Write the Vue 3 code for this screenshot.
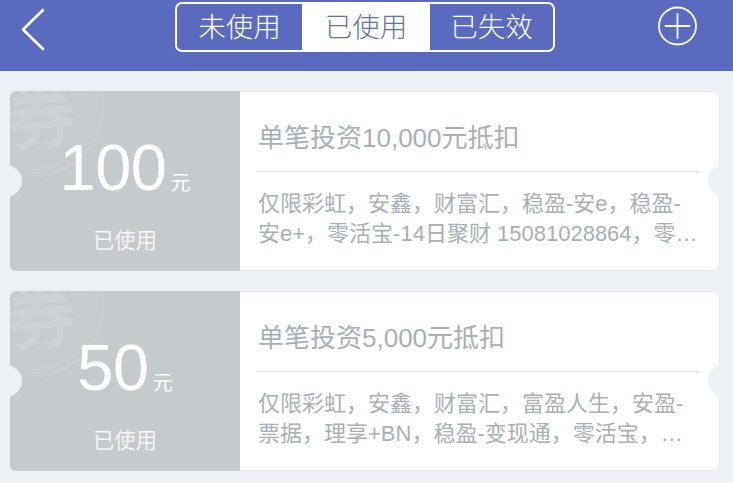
<template>
  <div class="page">
    <header class="header">
      <button class="back" aria-label="返回">
        <svg width="26" height="44" viewBox="0 0 26 44" fill="none" stroke="#fff" stroke-width="2.6" stroke-linecap="round" stroke-linejoin="round">
          <path d="M23 3 L3 22.5 L23 42"/>
        </svg>
      </button>
      <nav class="tabs">
        <span v-for="tab in tabs" :key="tab" class="tab" :class="{ active: tab === '已使用' }">{{ tab }}</span>
      </nav>
      <button class="add" aria-label="添加">
        <svg width="40" height="40" viewBox="0 0 40 40" fill="none" stroke="#fff" stroke-linecap="round">
          <circle cx="19.5" cy="20" r="18.5" stroke-width="1.8"/>
          <path d="M19.5 8 V32 M7.5 20 H31.5" stroke-width="1.8"/>
        </svg>
      </button>
    </header>

    <main class="list">
      <article v-for="c in coupons" :key="c.amount" class="coupon">
        <div class="left">
          <div class="stamp"><span class="stamp-char">券</span></div>
          <div class="amount"><span class="num">{{ c.amount }}</span><span class="unit">元</span></div>
          <div class="state">已使用</div>
        </div>
        <div class="right">
          <h3 class="title">{{ c.title }}</h3>
          <p class="desc">{{ c.desc }}</p>
        </div>
        <i class="notch notch-l"></i>
        <i class="notch notch-r"></i>
      </article>
    </main>
  </div>
</template>

<script setup>
const tabs = ['未使用', '已使用', '已失效']

const coupons = [
  {
    amount: 100,
    title: '单笔投资10,000元抵扣',
    desc: '仅限彩虹，安鑫，财富汇，稳盈-安e，稳盈-安e+，零活宝-14日聚财 15081028864，零活宝-30日聚财，稳盈-变现通',
  },
  {
    amount: 50,
    title: '单笔投资5,000元抵扣',
    desc: '仅限彩虹，安鑫，财富汇，富盈人生，安盈-票据，理享+BN，稳盈-变现通，零活宝，稳盈-安e，稳盈-安e+，财富汇',
  },
]
</script>

<style>
html, body { margin: 0; background: #edf1f5; }
</style>

<style scoped>
.page {
  width: 733px;
  height: 483px;
  overflow: hidden;
  background: #edf1f5;
  font-family: "Liberation Sans", "Noto Sans CJK SC", sans-serif;
}

/* HEADER */
.header {
  height: 71px;
  background: #5a6bbf;
  display: grid;
  grid-template-columns: 175px 380px 1fr;
  align-items: start;
}
.back, .add {
  border: none;
  background: none;
  padding: 0;
  display: flex;
}
.back { margin: 7px 0 0 20px; }
.add { margin: 6px 0 0 103px; }
.tabs {
  margin-top: 2px;
  height: 50px;
  box-sizing: border-box;
  border: 2px solid #fff;
  border-radius: 7px;
  display: grid;
  grid-template-columns: 125px 128px 1fr;
  overflow: hidden;
}
.tab {
  color: #fff;
  font-size: 27.5px;
  font-weight: 300;
  line-height: 47px;
  text-align: center;
}
.tab.active {
  background: #fff;
  color: #6272ab;
}

/* COUPONS */
.list {
  padding: 20px 13px 0 10px;
  display: flex;
  flex-direction: column;
  gap: 20px;
}
.coupon {
  position: relative;
  height: 180px;
  display: flex;
  border-radius: 6px;
  overflow: hidden;
  background: #fff;
  box-shadow: inset 0 0 0 1px #e6e9ed;
}
.left {
  position: relative;
  width: 230px;
  flex-shrink: 0;
  background: #c5cacd;
  color: #fff;
  text-align: center;
  overflow: hidden;
}
.stamp {
  position: absolute;
  left: -46px;
  top: -54px;
  width: 136px;
  height: 136px;
  border: 2px solid rgba(255, 255, 255, 0.12);
  outline: 2px dotted rgba(255, 255, 255, 0.12);
  outline-offset: -9px;
  border-radius: 50%;
  background: rgba(255, 255, 255, 0.02);
  display: flex;
  align-items: center;
  justify-content: center;
}
.stamp-char {
  font-size: 70px;
  font-weight: 700;
  line-height: 1;
  color: rgba(255, 255, 255, 0.14);
  transform: translate(8px, 13px) rotate(-5deg);
}
.amount {
  position: relative;
  height: 66px;
  margin-top: 44px;
  display: flex;
  align-items: baseline;
  justify-content: center;
  line-height: 66px;
}
.num {
  font-size: 65px;
  letter-spacing: -0.5px;
}
.unit {
  font-size: 20px;
  margin-left: 4px;
}
.state {
  position: relative;
  margin-top: 25px;
  font-size: 21.3px;
  line-height: 30px;
  color: rgba(255, 255, 255, 0.85);
}
.right {
  flex: 1;
  min-width: 0;
  padding: 0 20px 0 18px;
}
.title {
  margin: 0;
  height: 81px;
  box-sizing: border-box;
  border-bottom: 1px solid #dfe2e6;
  font-size: 26px;
  font-weight: 400;
  line-height: 94px;
  color: #a7b0b8;
}
.desc {
  margin: 17px 0 0;
  font-size: 22px;
  line-height: 30px;
  color: #a7b0b8;
  display: -webkit-box;
  -webkit-box-orient: vertical;
  -webkit-line-clamp: 2;
  overflow: hidden;
}
.notch {
  position: absolute;
  top: 74px;
  width: 32px;
  height: 32px;
  border-radius: 50%;
  background: #edf1f5;
}
.notch-l { left: -20px; }
.notch-r { right: -20px; }
</style>
